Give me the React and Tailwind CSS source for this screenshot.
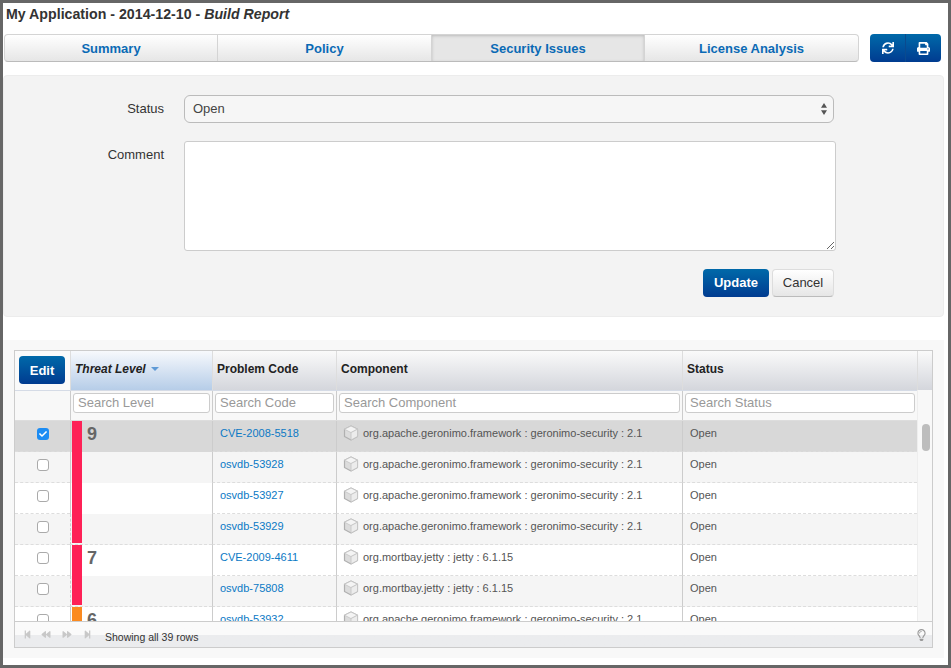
import { FaSync, FaPrint, FaRegLightbulb, FaStepBackward, FaBackward, FaForward, FaStepForward, FaCheck } from "react-icons/fa";

const tabs = ["Summary", "Policy", "Security Issues", "License Analysis"];

const apache = "org.apache.geronimo.framework : geronimo-security : 2.1";
const jetty = "org.mortbay.jetty : jetty : 6.1.15";

const rows = [
  { code: "CVE-2008-5518", component: apache, level: "9", bar: "bg-[#fe2156]", selected: true },
  { code: "osvdb-53928", component: apache, bar: "bg-[#fe2156]" },
  { code: "osvdb-53927", component: apache, bar: "bg-[#fe2156]" },
  { code: "osvdb-53929", component: apache, bar: "bg-[#fe2156]", last: true },
  { code: "CVE-2009-4611", component: jetty, level: "7", bar: "bg-[#fe2156]" },
  { code: "osvdb-75808", component: jetty, bar: "bg-[#fe2156]", last: true },
  { code: "osvdb-53932", component: apache, level: "6", bar: "bg-[#fb8a1f]" },
];

const cols = "grid grid-cols-[55px_142px_124px_346px_235px]";

const BoxIcon = () => (
  <svg viewBox="0 0 16 16" className="w-[16px] h-[16px] shrink-0 mr-[4px]">
    <path d="M8 1 14.5 4.2V11.5L8 15 1.5 11.5V4.2Z" fill="#dcdcdc" stroke="#b0b0b0" strokeWidth="1.2" strokeLinejoin="round" />
    <path d="M1.5 4.2 8 7.6 14.5 4.2 8 1Z" fill="#f4f4f4" stroke="#c4c4c4" strokeWidth="0.8" strokeLinejoin="round" />
    <path d="M8 7.6V15 L14.5 11.5V4.2Z" fill="#ececec" stroke="#c4c4c4" strokeWidth="0.8" />
  </svg>
);

const Row = ({ row, index }) => {
  const bg = row.selected ? "bg-[#d8d8d8]" : index % 2 ? "bg-[#f5f5f5]" : "bg-white";
  const cell = "flex items-center border-l border-b border-[#ccc] border-b-[#ddd] [border-bottom-style:dashed] pb-[6px]";
  return (
    <div className={`${cols} h-[31px] text-[11px] text-[#555] ${bg}`}>
      <div className="flex items-center justify-center pb-[5px] border-b border-dashed border-[#ddd]">
        {row.selected ? (
          <span className="w-[12px] h-[12px] rounded-[3px] bg-[#1c8cf3] flex items-center justify-center">
            <FaCheck className="w-[8px] h-[8px] text-white" />
          </span>
        ) : (
          <span className="w-[12px] h-[12px] rounded-[3px] border border-[#aaa] bg-white" />
        )}
      </div>
      <div className={`flex border-l border-l-[#ccc] pl-[1px] ${row.last ? "pb-[1px] border-b border-dashed border-b-[#ddd]" : ""}`}>
        <div className={`w-[10px] ${row.bar}`} />
        {row.level && <span className="pl-[5px] pt-[1px] text-[18px] leading-[24px] font-bold text-[#666]">{row.level}</span>}
      </div>
      <div className={`${cell} pl-[7px] text-[#0b79c5]`}>{row.code}</div>
      <div className={`${cell} pl-[6px]`}><BoxIcon />{row.component}</div>
      <div className={`${cell} pl-[7px]`}>Open</div>
    </div>
  );
};

export default function App() {
  return (
    <div className="w-[951px] h-[668px] overflow-hidden border-[3px] border-[#666] bg-white font-['Liberation_Sans',Arial,sans-serif] text-[#333]">
      <h1 className="pl-[3px] h-[31px] pt-[2px] text-[14.2px] leading-[18px] font-bold text-[#333]">
        My Application - 2014-12-10 - <i>Build Report</i>
      </h1>

      <div className="flex h-[28px] pl-[1px]">
        <div className="w-[855px] grid grid-cols-[212px_214px_213px_214px] border border-[#d4d4d4] border-b-[#bbb] rounded-[4px] overflow-hidden bg-linear-to-b from-white to-[#e6e6e6]">
          {tabs.map((tab, i) => (
            <div
              key={tab}
              className={`flex items-center justify-center pt-[1px] text-[13px] font-bold text-[#0a6ab5] ${i ? "border-l border-[#d4d4d4]" : ""} ${i === 2 ? "bg-[#e6e6e6] shadow-[inset_0_1px_3px_#bbb]" : ""}`}
            >
              {tab}
            </div>
          ))}
        </div>
        <div className="ml-[11px] w-[71px] flex rounded-[4px] overflow-hidden bg-linear-to-b from-[#0069a9] to-[#003b90] text-white">
          <div className="w-[36px] flex items-center justify-center border-r border-[#0a4a8e]">
            <FaSync className="w-[12px] h-[12px]" />
          </div>
          <div className="flex-1 flex items-center justify-center">
            <FaPrint className="w-[13px] h-[13px]" />
          </div>
        </div>
      </div>

      <div className="mt-[13px] w-[941px] h-[242px] bg-[#f3f3f3] border border-[#ececec] rounded-[4px] pt-[19px] pl-[180px] text-[13px]">
        <div className="flex items-center h-[28px]">
          <label className="w-0">
            <span className="block w-[160px] -ml-[180px] text-right">Status</span>
          </label>
          <div className="w-[650px] h-[28px] flex items-center justify-between rounded-[6px] border border-[#bbb] bg-[#f6f6f6] pl-[8px] pr-[6px] text-[#444]">
            Open
            <svg viewBox="0 0 6 12" className="w-[6px] h-[12px]">
              <path d="M3 0 6 4.8H0ZM3 12 0 7.2H6Z" fill="#555" />
            </svg>
          </div>
        </div>
        <div className="flex mt-[18px]">
          <label className="w-0">
            <span className="block w-[160px] -ml-[180px] text-right pt-[4px]">Comment</span>
          </label>
          <textarea className="w-[652px] h-[110px] rounded-[3px] border border-[#ccc] bg-white" />
        </div>
        <div className="flex justify-end gap-[3px] w-[650px] mt-[18px]">
          <button className="w-[66px] h-[28px] rounded-[4px] bg-linear-to-b from-[#0069a9] to-[#003b90] text-white font-bold">Update</button>
          <button className="w-[62px] h-[28px] rounded-[4px] border border-[#ddd] border-b-[#bbb] bg-linear-to-b from-white to-[#e6e6e6] text-[#333]">Cancel</button>
        </div>
      </div>

      <div className="mt-[23px] w-[941px] h-[318px] bg-[#f8f8f8] pt-[10px] pl-[11px]">
        <div className="w-[919px] h-[298px] border border-[#ccc] flex flex-col bg-[#f8f8f8]">
          <div className="flex flex-1 min-h-0">
            <div className="w-[902px] flex flex-col min-h-0">
              <div className={`${cols} h-[39px] text-[12px] font-bold text-[#222] shrink-0`}>
                <div className="pl-[4px] pt-[5px] bg-[#fafafa]">
                  <button className="w-[46px] h-[28px] rounded-[4px] bg-linear-to-b from-[#0069a9] to-[#003b90] text-white text-[13px] font-bold pt-[1px]">Edit</button>
                </div>
                <div className="flex items-center gap-[5px] pl-[4px] pb-[4px] border-l border-[#ddd] italic bg-linear-to-b from-[#f7f9fc] to-[#b6cde8]">
                  Threat Level
                  <span className="w-0 h-0 mt-[1px] border-x-[4px] border-x-transparent border-t-[4px] border-t-[#5f9ad6]" />
                </div>
                {["Problem Code", "Component", "Status"].map((h) => (
                  <div key={h} className="flex items-center pl-[4px] pb-[4px] border-l border-[#ddd] bg-linear-to-b from-[#fafafa] to-[#d4d6dc]">{h}</div>
                ))}
              </div>
              <div className={`${cols} h-[31px] shrink-0 bg-[#f8f8f8] border-b border-[#ddd] border-t border-t-[#d5dbe6]`}>
                <div />
                {["Search Level", "Search Code", "Search Component", "Search Status"].map((p) => (
                  <div key={p} className="border-l border-[#ccc] px-[2px] pt-[2px]">
                    <input placeholder={p} className="block w-full h-[20px] px-[4px] pb-[2px] rounded-[3px] border border-[#ccc] bg-white text-[13px] placeholder:text-[#999] outline-none" />
                  </div>
                ))}
              </div>
              <div className="flex-1 min-h-0 overflow-hidden">
                {rows.map((row, i) => (
                  <Row key={row.code} row={row} index={i} />
                ))}
              </div>
            </div>
            <div className="flex-1 flex flex-col">
              <div className="h-[39px] border-l border-[#ddd] bg-linear-to-b from-[#fafafa] to-[#d4d6dc]" />
              <div className="flex-1 pt-[34px] pl-[4px] bg-[#f8f8f8] border-l border-[#eee]">
                <div className="w-[8px] h-[27px] rounded-full bg-[#bdbdbd]" />
              </div>
            </div>
          </div>
          <div className="h-[26px] shrink-0 flex items-center pl-[8px] pr-[5px] border-t border-[#ccc] bg-linear-to-b from-[#fafafa] from-50% to-[#ebecee] to-50% text-[10.5px] text-[#333]">
            <div className="flex w-[82px] text-[#c8c8c8]">
              <FaStepBackward className="w-[9px] h-[9px]" />
              <FaBackward className="w-[10px] h-[9px] ml-[9px]" />
              <FaForward className="w-[10px] h-[9px] ml-[11px]" />
              <FaStepForward className="w-[9px] h-[9px] ml-[11px]" />
            </div>
            <span className="mt-[7px]">Showing all 39 rows</span>
            <FaRegLightbulb className="ml-auto w-[11px] h-[12px] text-[#999]" />
          </div>
        </div>
      </div>
    </div>
  );
}
